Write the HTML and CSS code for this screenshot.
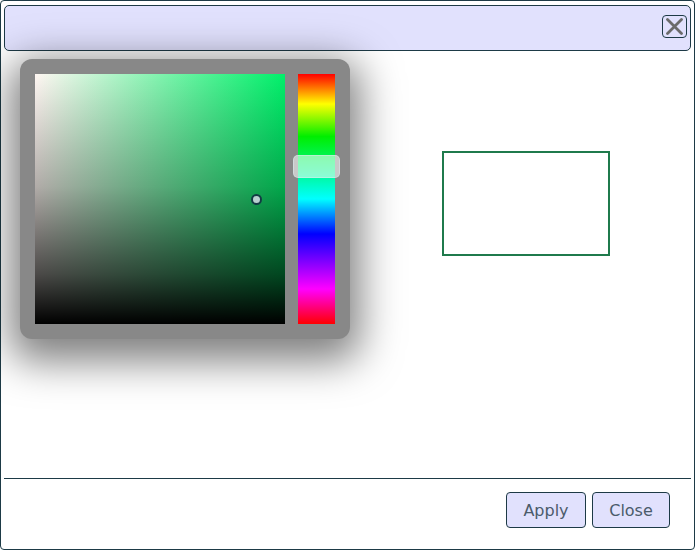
FILE: index.html
```html
<!DOCTYPE html>
<html>
<head>
<meta charset="utf-8">
<link rel="stylesheet" href="styles.css">
</head>
<body>
<div class="dialog">
  <div class="titlebar">
    <button class="close-x" aria-label="Close">
      <svg width="19" height="17" viewBox="0 0 19 17"><path d="M2.5 1.5 L16.5 15.5 M16.5 1.5 L2.5 15.5" stroke="#6b6b6b" stroke-width="2.8" stroke-linecap="round" fill="none"/></svg>
    </button>
  </div>
  <div class="content">
    <div class="picker">
      <div class="sv">
        <div class="sv-cursor"></div>
      </div>
      <div class="hue">
        <div class="hue-thumb"></div>
      </div>
    </div>
    <div class="preview"></div>
  </div>
  <div class="footer">
    <button class="btn btn-apply">Apply</button>
    <button class="btn btn-close">Close</button>
  </div>
</div>
</body>
</html>
```
FILE: styles.css
```css
html, body {
  margin: 0;
  padding: 0;
  background: #ffffff;
}

.dialog {
  width: 695px;
  height: 550px;
  box-sizing: border-box;
  border: 1px solid #1d3a46;
  border-radius: 4px;
  display: flex;
  flex-direction: column;
  font-family: "DejaVu Sans", Verdana, sans-serif;
  background: #ffffff;
}

.titlebar {
  margin: 4px 3px 0 3px;
  height: 46px;
  box-sizing: border-box;
  border: 1px solid #1d3a46;
  border-radius: 5px;
  background: #e1e1fd;
  display: flex;
  align-items: flex-start;
  justify-content: flex-end;
  padding: 9px 3px 0 0;
}

.close-x {
  width: 25px;
  height: 23px;
  box-sizing: border-box;
  border: 1px solid #1d3a46;
  border-radius: 4px;
  background: #e1e1fd;
  padding: 0;
  margin: 0;
  display: flex;
  align-items: center;
  justify-content: center;
}

.content {
  flex: 1;
  display: flex;
  align-items: flex-start;
  gap: 92px;
  padding: 8px 0 0 19px;
}

.picker {
  width: 330px;
  height: 280px;
  box-sizing: border-box;
  padding: 15px;
  background: #888888;
  border-radius: 12px;
  display: flex;
  gap: 13px;
  box-shadow: 0 12px 40px 10px rgba(0, 0, 0, 0.5);
}

.sv {
  position: relative;
  width: 250px;
  height: 250px;
  background:
    linear-gradient(to bottom, rgba(0,0,0,0) 0%, rgba(0,0,0,0.3) 45%, rgba(0,0,0,0.7) 80%, #000000 100%),
    linear-gradient(to right, #fff6f2, #00f06a);
}

.sv-cursor {
  position: absolute;
  left: 216px;
  top: 120px;
  width: 11px;
  height: 11px;
  box-sizing: border-box;
  border: 2px solid #133c44;
  border-radius: 50%;
  background: #b9d0d0;
}

.hue {
  position: relative;
  width: 37px;
  height: 250px;
  background: linear-gradient(to bottom,
    #ff0000 0%,
    #ffff00 12%,
    #00ee00 25%,
    #00ffff 50%,
    #0000ff 64%,
    #ff00ff 86%,
    #ff0000 100%);
}

.hue-thumb {
  position: absolute;
  left: -5px;
  top: 81px;
  width: 47px;
  height: 23px;
  box-sizing: border-box;
  border-radius: 5px;
  background: rgba(255, 255, 255, 0.55);
  border: 1px solid rgba(220, 235, 240, 0.5);
}

.preview {
  margin-top: 92px;
  width: 168px;
  height: 105px;
  box-sizing: border-box;
  border: 2px solid #1f7a4c;
}

.footer {
  margin: 0 3px;
  border-top: 1px solid #1d3a46;
  padding: 13px 21px 21px 0;
  display: flex;
  justify-content: flex-end;
  gap: 6px;
}

.btn {
  height: 36px;
  box-sizing: border-box;
  border: 1px solid #1d3a46;
  border-radius: 4px;
  background: #e1e1fd;
  color: #4b5b6b;
  font-family: "DejaVu Sans", Verdana, sans-serif;
  font-size: 16px;
  padding: 0;
  margin: 0;
}

.btn-apply { width: 80px; }
.btn-close { width: 78px; }
```
